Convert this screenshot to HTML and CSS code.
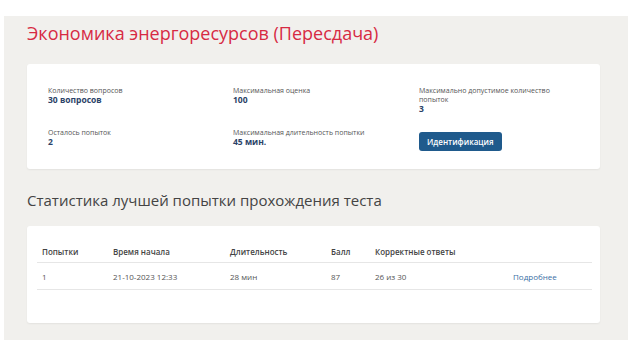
FILE: index.html
```html
<!DOCTYPE html>
<html lang="ru">
<head>
    <meta charset="UTF-8">
    <title>Экономика энергоресурсов (Пересдача)</title>
    <link rel="stylesheet" href="styles.css">
</head>
<body>
    <div class="page">
        <h1 class="title">Экономика энергоресурсов (Пересдача)</h1>

        <!-- Test info -->
        <div class="card info-card">
            <div class="info-grid">
                <div class="info-item">
                    <div class="info-label">Количество вопросов</div>
                    <div class="info-value">30 вопросов</div>
                </div>
                <div class="info-item">
                    <div class="info-label">Максимальная оценка</div>
                    <div class="info-value">100</div>
                </div>
                <div class="info-item">
                    <div class="info-label wrap">Максимально допустимое количество попыток</div>
                    <div class="info-value">3</div>
                </div>
                <div class="info-item">
                    <div class="info-label">Осталось попыток</div>
                    <div class="info-value">2</div>
                </div>
                <div class="info-item">
                    <div class="info-label">Максимальная длительность попытки</div>
                    <div class="info-value">45 мин.</div>
                </div>
                <div class="info-item">
                    <button class="btn-primary">Идентификация</button>
                </div>
            </div>
        </div>

        <h2 class="section-title">Статистика лучшей попытки прохождения теста</h2>

        <!-- Best attempt -->
        <div class="card table-card">
            <table class="stats-table">
                <thead>
                    <tr>
                        <th class="col-num">Попытки</th>
                        <th class="col-start">Время начала</th>
                        <th class="col-dur">Длительность</th>
                        <th class="col-score">Балл</th>
                        <th class="col-correct">Корректные ответы</th>
                        <th></th>
                    </tr>
                </thead>
                <tbody>
                    <tr>
                        <td>1</td>
                        <td>21-10-2023 12:33</td>
                        <td>28 мин</td>
                        <td>87</td>
                        <td>26 из 30</td>
                        <td><a href="#" class="link">Подробнее</a></td>
                    </tr>
                </tbody>
            </table>
        </div>
    </div>
</body>
</html>
```

FILE: styles.css
```css
body {
    margin: 0;
    padding: 16px 6px 22px 4px;
    background: #fff;
    font-family: "Open Sans", sans-serif;
}
.page {
    background: #f1f0ed;
    padding: 5px 28px 17px 23px;
}
.title {
    margin: 0 0 19px 0;
    font-size: 18px;
    font-weight: 400;
    color: #d72a43;
    line-height: 24px;
}
.card {
    background: white;
    border-radius: 3px;
    box-shadow: 0 1px 2px rgba(0,0,0,0.06);
}
.info-card {
    padding: 22px 21px 20px 21px;
    height: 63px;
}
.info-grid {
    display: grid;
    grid-template-columns: 185px 186px 1fr;
    row-gap: 14px;
}
.info-label {
    font-size: 7px;
    color: #555;
    line-height: 9px;
}
.info-label.wrap {
    width: 140px;
}
.info-value {
    font-size: 8.5px;
    font-weight: 700;
    color: #2b4267;
    line-height: 10px;
}
.btn-primary {
    margin-top: -3px;
    padding: 0 8px;
    height: 19px;
    border: none;
    border-radius: 3px;
    background: #1f5a8c;
    color: white;
    font-family: "Open Sans", sans-serif;
    font-size: 8px;
    font-weight: 600;
}
.section-title {
    margin: 21px 0 16px 0;
    font-size: 15px;
    font-weight: 400;
    color: #444;
    line-height: 20px;
}
.table-card {
    padding: 15px 8px 33px 10px;
}
.stats-table {
    width: 100%;
    border-collapse: collapse;
    font-size: 8px;
    color: #555;
}
.stats-table th {
    text-align: left;
    font-weight: 600;
    color: #444;
    padding: 5px 5px;
    line-height: 11px;
    border-bottom: 1px solid #e6e6e6;
}
.stats-table td {
    padding: 8px 5px 7px 5px;
    line-height: 11px;
    border-bottom: 1px solid #e6e6e6;
}
.col-num { width: 61px; }
.col-start { width: 107px; }
.col-dur { width: 91px; }
.col-score { width: 34px; }
.col-correct { width: 128px; }
.link {
    color: #3a6ea5;
    text-decoration: none;
}
```
